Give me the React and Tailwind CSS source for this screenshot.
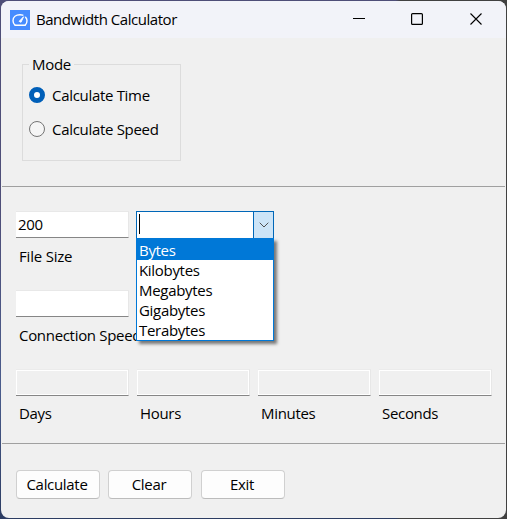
import React from 'react';

const UNITS = ['Bytes', 'Kilobytes', 'Megabytes', 'Gigabytes', 'Terabytes'];
const RESULTS = ['Days', 'Hours', 'Minutes', 'Seconds'];

function AppIcon() {
  return (
    <svg className="ml-[9px] h-5 w-5 shrink-0" viewBox="0 0 20 20" fill="none">
      <rect width="20" height="20" fill="#468cff" />
      <path d="M5 15.300C3.800 14 3 12.400 3 10.700C3 7 6 4.700 10 4.700c1.200 0 2 .2 2.800.5M15.600 7.300c.9 1 1.400 2.200 1.400 3.500 0 1.700-.6 3.300-1.800 4.500" stroke="white" strokeWidth="1.400" strokeLinejoin="round" strokeLinecap="round" />
      <path d="M5 15.300H15.200" stroke="white" strokeWidth="1.400" />
      <path d="M9.200 11.300 13.600 6.700 11 12.300Z" fill="white" stroke="white" strokeWidth=".9" strokeLinejoin="round" />
    </svg>
  );
}

function TitleBar() {
  return (
    <header className="flex h-[37px] shrink-0 items-center bg-[#f2f3f9]">
      <AppIcon />
      <h1 className="ml-1.5 grow whitespace-nowrap pb-0.5 leading-5 tracking-[-0.46px]">Bandwidth Calculator</h1>
      <svg className="mr-[23px] h-[37px] w-[130px]" viewBox="0 0 130 37" fill="none" stroke="black">
        <path d="M0 17.500H12" />
        <rect x="58.600" y="12.600" width="10.800" height="10.800" rx="1" strokeWidth="1.200" />
        <path d="M117.500 12.500 128.500 23.500M128.500 12.500 117.500 23.500" strokeWidth="1.100" />
      </svg>
    </header>
  );
}

function Radio({ label, checked }) {
  return (
    <label className="flex h-[34px] items-center">
      <span
        className={
          checked
            ? 'h-4 w-4 rounded-full border-[5px] border-[#005fb8] bg-white'
            : 'h-4 w-4 rounded-full border border-[#747474] bg-[#f5f5f5]'
        }
      />
      <span className="ml-[7px] whitespace-nowrap leading-5">{label}</span>
    </label>
  );
}

function Field({ value, disabled }) {
  return (
    <div
      className={
        disabled
          ? 'h-[27px] w-[113px] border-t border-r border-b border-t-[#ebebeb] border-r-[#e7e7e7] border-b-[#868686]'
          : 'h-[27px] w-[113px] border-t border-r border-b border-t-[#e8e8e8] border-r-[#e7e7e7] border-b-[#868686] bg-white'
      }
    >
      <div className={disabled ? 'h-full border border-white' : 'pl-0.5 pt-[3px] leading-[18px]'}>{value}</div>
    </div>
  );
}

function UnitSelect() {
  return (
    <div className="relative z-10 ml-[7px] w-[138px]">
      <div className="flex h-7 border border-[#0067b8] bg-white">
        <span className="ml-0.5 mt-0.5 h-5 w-px bg-black" />
        <span className="ml-auto flex w-5 items-center justify-center border-l border-[#0067b8] bg-[#cce4f7]">
          <svg className="h-[6px] w-[10px]" viewBox="0 0 10 6" fill="none" stroke="#505050">
            <path d="M.7.700 5 5 9.300.700" />
          </svg>
        </span>
      </div>
      <ul className="absolute left-0 top-[27px] h-[103px] w-full border border-[#0078d7] bg-white pt-0.5 shadow-[3px_3px_3px_rgba(0,0,0,0.5)]">
        {UNITS.map((unit, i) => (
          <li
            key={unit}
            className={
              i === 0
                ? '-mt-0.5 h-[21px] bg-[#0078d7] pl-0.5 pt-0.5 leading-[18px] text-white'
                : 'h-5 pl-0.5 pt-px leading-[18px]'
            }
          >
            {unit}
          </li>
        ))}
      </ul>
    </div>
  );
}

function Button({ children }) {
  return (
    <button className="h-[29px] w-[84px] rounded-[4px] border border-[#d0d0d0] border-b-[#bcbcbc] bg-[#fdfdfd] pb-0.5 pr-0.5 leading-5">
      {children}
    </button>
  );
}

export default function App() {
  return (
    <div className="h-[519px] w-[507px] bg-[linear-gradient(to_right,transparent_0%,transparent_78%,#414141_79%),linear-gradient(#4e4e78_0%,#4e4e78_40%,#4a5c8c_75%,#2c3c62_100%)] p-px font-['Open_Sans','Noto_Sans',sans-serif] text-[15px] tracking-[-0.31px] text-black">
      <main className="flex h-[517px] w-[505px] flex-col overflow-hidden rounded-[8px] bg-[#f0f0f0]">
        <TitleBar />
        <fieldset className="ml-[21px] mt-4 h-[107px] w-[159px] shrink-0 border border-[#dcdcdc] pl-1.5">
          <legend className="h-5 px-[3px] leading-5">Mode</legend>
          <div className="mt-[4px]">
            <Radio label="Calculate Time" checked />
            <Radio label="Calculate Speed" />
          </div>
        </fieldset>
        <hr className="mx-px mt-[25px] border-[#a0a0a0]" />
        <section className="ml-[15px] mt-6">
          <div className="flex h-[27px]">
            <Field value="200" />
            <UnitSelect />
          </div>
          <div className="ml-[3px] mt-[9px] h-5 leading-[18px] tracking-[-0.2px]">File Size</div>
          <div className="mt-[23px]">
            <Field />
          </div>
          <div className="ml-[3px] mt-[9px] h-5 leading-[18px]">Connection Speed</div>
          <div className="mt-[23px] flex gap-2">
            {RESULTS.map((name) => (
              <div key={name}>
                <Field disabled />
                <div className="ml-[3px] mt-2 h-5 leading-[18px]">{name}</div>
              </div>
            ))}
          </div>
        </section>
        <hr className="mx-px mt-[19px] border-[#a0a0a0]" />
        <footer className="ml-[15px] mt-[26px] flex">
          <Button>Calculate</Button>
          <div className="ml-2 flex gap-[9px]">
            <Button>Clear</Button>
            <Button>Exit</Button>
          </div>
        </footer>
      </main>
    </div>
  );
}
